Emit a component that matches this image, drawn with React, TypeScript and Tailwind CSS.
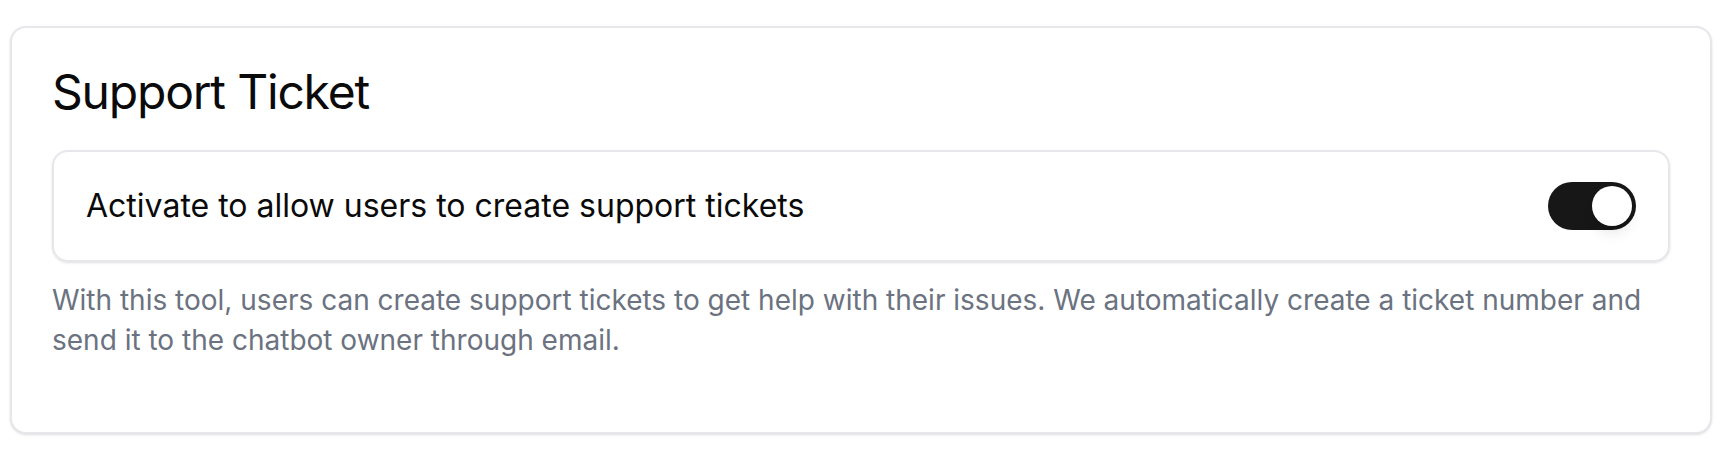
function Toggle({ on }: { on: boolean }) {
  return (
    <button
      type="button"
      role="switch"
      aria-checked={on}
      className={
        "inline-flex h-12 w-[88px] shrink-0 items-center rounded-full border-4 border-transparent " +
        (on ? "bg-[#171717]" : "bg-[#e5e7eb]")
      }
    >
      <span
        className={
          "block h-10 w-10 rounded-full bg-white shadow-lg " +
          (on ? "translate-x-10" : "translate-x-0")
        }
      />
    </button>
  )
}

export default function App() {
  return (
    <div className="min-h-screen bg-white pl-[10px] pr-[16px] pt-[26px] font-['Inter',sans-serif] text-[#0a0a0a]">
      <div className="rounded-2xl border-2 border-[#e5e7eb] bg-white px-10 pt-10 pb-[72px] shadow-sm">
        <h2 className="text-5xl leading-none font-normal tracking-tight">Support Ticket</h2>

        <div className="mt-[34px] flex h-[112px] items-center justify-between rounded-2xl border-2 border-[#e5e7eb] px-8 shadow-sm">
          <span className="text-[32px] leading-[48px]">
            Activate to allow users to create support tickets
          </span>
          <Toggle on />
        </div>

        <p className="mt-[18px] text-[28px] leading-[40px] text-[#6b7280]">
          With this tool, users can create support tickets to get help with their issues. We
          automatically create a ticket number and send it to the chatbot owner through email.
        </p>
      </div>
    </div>
  )
}
